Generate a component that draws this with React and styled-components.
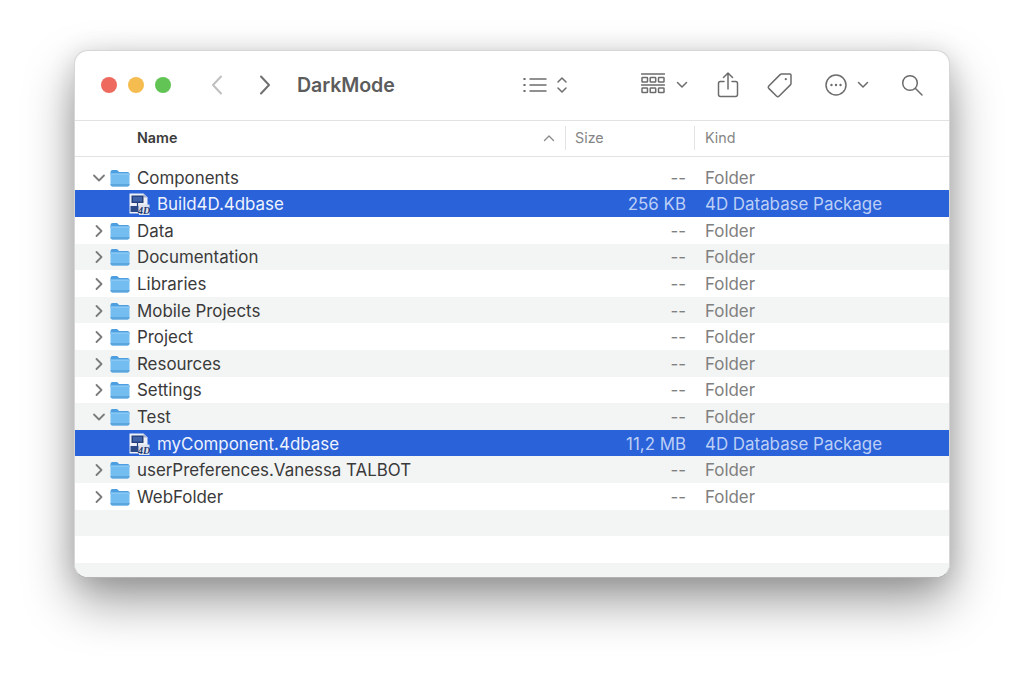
import React from "react";
import styled, { createGlobalStyle } from "styled-components";

const Global = createGlobalStyle`
  html, body { margin: 0; padding: 0; background: #fff; }
  body { font-family: Inter, "Liberation Sans", sans-serif; width: 1024px; height: 676px; overflow: hidden; }
`;

const Stage = styled.div`
  padding: 50px 0 0 74px;
`;
const Window = styled.div`
  width: 876px;
  height: 528px;
  border-radius: 14px;
  border: 1px solid #d6d6d6;
  border-bottom-color: #b4b4b4;
  box-sizing: border-box;
  background: #fff;
  overflow: hidden;
  display: flex;
  flex-direction: column;
  box-shadow: 0 24px 50px rgba(0, 0, 0, 0.38), 0 4px 26px rgba(0, 0, 0, 0.14);
`;
const Toolbar = styled.div`
  height: 69px;
  flex: none;
  display: flex;
  align-items: center;
  border-bottom: 1px solid #e2e2e2;
  padding-left: 26px;
  color: #6c6c6c;
`;
const ToolbarInner = styled.div`
  display: flex;
  align-items: center;
  margin-top: -2px;
`;
const Lights = styled.div`
  display: flex;
  gap: 11px;
  margin-right: 38px;
`;
const Light = styled.span`
  width: 16px;
  height: 16px;
  border-radius: 50%;
  background: ${(p) => p.$c};
`;
const Nav = styled.svg`
  width: 16px;
  height: 22px;
  margin-right: ${(p) => p.$mr}px;
  fill: none;
  stroke: ${(p) => p.$c};
  stroke-width: 2;
  stroke-linecap: round;
  stroke-linejoin: round;
`;
const Title = styled.div`
  font-size: 19.6px;
  font-weight: 600;
  color: #5c5c5c;
  letter-spacing: -0.1px;
  width: 226px;
`;
const Tool = styled.svg`
  flex: none;
  fill: none;
  stroke: #6c6c6c;
  stroke-width: 1.5;
  stroke-linecap: round;
  stroke-linejoin: round;
  margin-right: ${(p) => p.$mr}px;
`;
const Header = styled.div`
  height: 36px;
  flex: none;
  box-sizing: border-box;
  border-bottom: 1px solid #e3e3e3;
  display: grid;
  grid-template-columns: 491px 129px 1fr;
  align-items: center;
  padding-bottom: 2px;
`;
const HeadCell = styled.div`
  height: 24px;
  display: flex;
  align-items: center;
  justify-content: space-between;
  box-sizing: border-box;
  padding-left: ${(p) => p.$pl}px;
  padding-right: 10px;
  border-right: ${(p) => (p.$sep ? "1px solid #e3e3e3" : "none")};
  font-size: 14.3px;
  font-weight: ${(p) => (p.$strong ? 600 : 400)};
  color: ${(p) => (p.$strong ? "#3b3b3b" : "#858585")};
`;
const Sort = styled.svg`
  width: 12px;
  height: 8px;
  fill: none;
  stroke: #8c8c8c;
  stroke-width: 1.4;
  stroke-linecap: round;
  stroke-linejoin: round;
`;
const List = styled.div`
  flex: 1;
  min-height: 0;
  overflow: hidden;
  padding-top: 6.8px;
`;
const Row = styled.div`
  height: 26.6px;
  box-sizing: border-box;
  padding-top: 1px;
  display: grid;
  grid-template-columns: 490px 129px 1fr;
  align-items: center;
  font-size: 16.9px;
  background: ${(p) => (p.$sel ? "#2a62d9" : p.$alt ? "#f3f4f4" : "#fff")};
`;
const NameCell = styled.div`
  display: flex;
  align-items: center;
  padding-left: ${(p) => (p.$child ? 53 : 17)}px;
  color: ${(p) => (p.$sel ? "#eef3fe" : "#3a3a3a")};
  white-space: nowrap;
`;
const Chevron = styled.svg`
  width: 14px;
  height: 14px;
  flex: none;
  margin-right: 4px;
  fill: none;
  stroke: #7b7b7b;
  stroke-width: 1.8;
  stroke-linecap: round;
  stroke-linejoin: round;
`;
const Ico = styled.svg`
  width: ${(p) => p.$w}px;
  height: ${(p) => p.$h || 20}px;
  flex: none;
  margin-right: ${(p) => p.$mr}px;
`;
const SizeCell = styled.div`
  text-align: right;
  padding-right: 8px;
  color: ${(p) => (p.$sel ? "#bccff6" : "#808080")};
`;
const KindCell = styled.div`
  padding-left: 11px;
  color: ${(p) => (p.$sel ? "#bccff6" : "#808080")};
`;

const Folder = () => (
  <Ico $w={20} $mr={7} viewBox="0 0 20 20">
    <path d="M0.5 4a2 2 0 0 1 2-2h4.6l2 2h8.4a2 2 0 0 1 2 2v1h-19z" fill="#4d9fdf" />
    <path d="M0.5 5.6h19v10.9a2 2 0 0 1-2 2h-15a2 2 0 0 1-2-2z" fill="#74bdf1" />
    <path d="M0.5 5.6h19v1.2h-19z" fill="#8fcbf5" />
    <path d="M2.5 18.5h15a2 2 0 0 0 2-2v-.6h-19v.6a2 2 0 0 0 2 2z" fill="#5ca6de" />
  </Ico>
);

const DbFile = () => (
  <Ico $w={22} $h={22} $mr={7} viewBox="0 0 22 22">
    <path d="M1.5 0.5h14l4 4V20.5H1.5z" fill="#eef1f7" />
    <path d="M15.5 0.5l4 4h-4z" fill="#a9b6cf" />
    <rect x="3.5" y="2.5" width="12" height="7.5" fill="#253f78" />
    <rect x="5" y="3.8" width="9" height="4.8" fill="#3f62a8" />
    <rect x="2.5" y="13" width="8" height="6" fill="#2d4a88" />
    <path d="M9.5 10v3" stroke="#253f78" strokeWidth="1.2" fill="none" />
    <path d="M11 11.5h10.5V22H11z" fill="#dde3ee" />
    <text x="16.2" y="20.5" fontSize="10" fontWeight="700" fontStyle="italic" fill="#1f3a70" textAnchor="middle" fontFamily="Liberation Serif, serif">4D</text>
  </Ico>
);

const Chev = ({ open }) => (
  <Chevron viewBox="0 0 14 14">
    <path d={open ? "M2 4.5l5 5 5-5" : "M4.5 2l5 5-5 5"} />
  </Chevron>
);

const rows = [
  { n: "Components", o: true, s: "--", k: "Folder" },
  { n: "Build4D.4dbase", c: true, s: "256 KB", k: "4D Database Package" },
  { n: "Data", s: "--", k: "Folder" },
  { n: "Documentation", s: "--", k: "Folder" },
  { n: "Libraries", s: "--", k: "Folder" },
  { n: "Mobile Projects", s: "--", k: "Folder" },
  { n: "Project", s: "--", k: "Folder" },
  { n: "Resources", s: "--", k: "Folder" },
  { n: "Settings", s: "--", k: "Folder" },
  { n: "Test", o: true, s: "--", k: "Folder" },
  { n: "myComponent.4dbase", c: true, s: "11,2 MB", k: "4D Database Package" },
  { n: "userPreferences.Vanessa TALBOT", s: "--", k: "Folder" },
  { n: "WebFolder", s: "--", k: "Folder" },
  {},
  {},
  {},
];

export default function App() {
  return (
    <>
      <Global />
      <Stage>
        <Window>
          <Toolbar>
            <ToolbarInner>
              <Lights>
                <Light $c="#ee6a5f" />
                <Light $c="#f5bd4f" />
                <Light $c="#61c454" />
              </Lights>
              <Nav $c="#c0c0c0" $mr={32} viewBox="0 0 16 22"><path d="M12 2.5L4 11l8 8.5" /></Nav>
              <Nav $c="#707070" $mr={24} viewBox="0 0 16 22"><path d="M4 2.5L12 11l-8 8.5" /></Nav>
              <Title>DarkMode</Title>
              <Tool $mr={8} width="24" height="20" viewBox="0 0 24 20">
                <path d="M7 4h16M7 10h16M7 16h16" />
                <path d="M1.2 4h.6M1.2 10h.6M1.2 16h.6" strokeWidth="2" />
              </Tool>
              <Tool $mr={72} width="14" height="20" viewBox="0 0 14 20" strokeWidth="1.8">
                <path d="M3 7l4-4 4 4M3 13l4 4 4-4" />
              </Tool>
              <Tool $mr={11} width="24" height="24" viewBox="0 0 24 24" strokeWidth="1.1">
                <path d="M0.5 1h23M0.5 12h23" />
                <rect x="1" y="4.5" width="5.5" height="4.5" rx="0.6" />
                <rect x="9.2" y="4.5" width="5.5" height="4.5" rx="0.6" />
                <rect x="17.5" y="4.5" width="5.5" height="4.5" rx="0.6" />
                <rect x="1" y="15" width="5.5" height="4.5" rx="0.6" />
                <rect x="9.2" y="15" width="5.5" height="4.5" rx="0.6" />
                <rect x="17.5" y="15" width="5.5" height="4.5" rx="0.6" />
              </Tool>
              <Tool $mr={29} width="12" height="8" viewBox="0 0 12 8" strokeWidth="1.7">
                <path d="M1.5 1.5L6 6l4.5-4.5" />
              </Tool>
              <Tool $mr={28} width="22" height="26" viewBox="0 0 22 26">
                <path d="M7 9.5H3.5a2 2 0 0 0-2 2V22.5a2 2 0 0 0 2 2h15a2 2 0 0 0 2-2V11.5a2 2 0 0 0-2-2H15" />
                <path d="M11 17V1.5M6.5 5.5L11 1l4.5 4.5" />
              </Tool>
              <Tool $mr={32} width="26" height="26" viewBox="0 0 26 26">
                <path d="M14.5 2H23a1 1 0 0 1 1 1v8.5a2 2 0 0 1-.6 1.4L12.2 24a2 2 0 0 1-2.8 0L2 16.6a2 2 0 0 1 0-2.8L13.1 2.6A2 2 0 0 1 14.5 2z" />
                <circle cx="18.8" cy="7.2" r="1.1" fill="#6c6c6c" stroke="none" />
              </Tool>
              <Tool $mr={10} width="22" height="22" viewBox="0 0 22 22">
                <circle cx="11" cy="11" r="10" />
                <circle cx="6.5" cy="11" r="1.2" fill="#6c6c6c" stroke="none" />
                <circle cx="11" cy="11" r="1.2" fill="#6c6c6c" stroke="none" />
                <circle cx="15.5" cy="11" r="1.2" fill="#6c6c6c" stroke="none" />
              </Tool>
              <Tool $mr={32} width="12" height="8" viewBox="0 0 12 8" strokeWidth="1.7">
                <path d="M1.5 1.5L6 6l4.5-4.5" />
              </Tool>
              <Tool $mr={0} width="22" height="22" viewBox="0 0 22 22" strokeWidth="1.8">
                <circle cx="9" cy="9" r="7.3" />
                <path d="M14.5 14.5L21 21" />
              </Tool>
            </ToolbarInner>
          </Toolbar>
          <Header>
            <HeadCell $strong $pl={62} $sep>
              Name
              <Sort viewBox="0 0 12 8"><path d="M1.5 6.5L6 2l4.5 4.5" /></Sort>
            </HeadCell>
            <HeadCell $pl={9} $sep>Size</HeadCell>
            <HeadCell $pl={10}>Kind</HeadCell>
          </Header>
          <List>
            {rows.map((r, i) => (
              <Row key={i} $sel={!!r.c} $alt={i % 2 === 1}>
                <NameCell $child={r.c} $sel={r.c}>
                  {r.n && !r.c && <Chev open={r.o} />}
                  {r.n && (r.c ? <DbFile /> : <Folder />)}
                  {r.n}
                </NameCell>
                <SizeCell $sel={r.c}>{r.s}</SizeCell>
                <KindCell $sel={r.c}>{r.k}</KindCell>
              </Row>
            ))}
          </List>
        </Window>
      </Stage>
    </>
  );
}
